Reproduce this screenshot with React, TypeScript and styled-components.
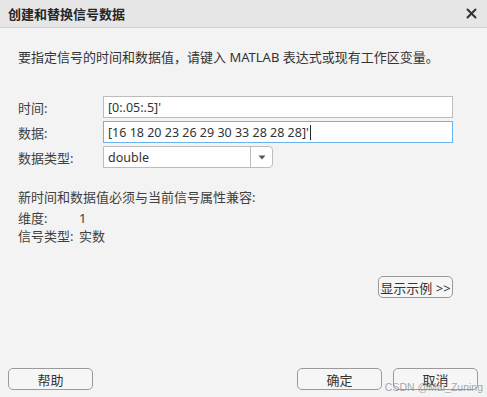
import styled, { createGlobalStyle } from 'styled-components';

const GlobalStyle = createGlobalStyle`
  html, body {
    margin: 0;
    padding: 0;
    background: #f3f3f3;
  }
  body {
    font-family: "Noto Sans", "Noto Sans CJK SC", sans-serif;
    color: #333;
  }
`;

const FONT = `"Noto Sans", "Noto Sans CJK SC", sans-serif`;

function App() {
  return (
    <Window>
      <GlobalStyle />
      <TitleBar>
        <Title>创建和替换信号数据</Title>
        <CloseButton aria-label="关闭">
          <svg width="11" height="11" viewBox="0 0 11 11">
            <path d="M1.5 1.5 L9.5 9.5 M9.5 1.5 L1.5 9.5" stroke="#333" strokeWidth="2" strokeLinecap="round" />
          </svg>
        </CloseButton>
      </TitleBar>

      <Body>
        <Intro>要指定信号的时间和数据值，请键入 MATLAB 表达式或现有工作区变量。</Intro>

        <Form>
          <Label>时间:</Label>
          <Field>[0:.05:.5]'</Field>

          <Label>数据:</Label>
          <Field focused>
            [16 18 20 23 26 29 30 33 28 28 28]'
            <Caret />
          </Field>

          <Label>数据类型:</Label>
          <Select>
            <SelectValue>double</SelectValue>
            <SelectArrow>
              <svg width="8" height="5" viewBox="0 0 8 5">
                <path d="M0.5 0.5 L7.5 0.5 L4 4.5 Z" fill="#555" />
              </svg>
            </SelectArrow>
          </Select>
        </Form>

        <Info>
          <InfoHead>新时间和数据值必须与当前信号属性兼容:</InfoHead>
          <InfoRow>
            <InfoKey>维度:</InfoKey>
            <span>1</span>
          </InfoRow>
          <InfoRow>
            <InfoKey>信号类型:</InfoKey>
            <span>实数</span>
          </InfoRow>
        </Info>

        <ExampleRow>
          <Button width={75}>显示示例 &gt;&gt;</Button>
        </ExampleRow>
      </Body>

      <Footer>
        <Button width={85}>帮助</Button>
        <FooterRight>
          <Button width={85}>确定</Button>
          <Button width={85}>取消</Button>
        </FooterRight>
      </Footer>

      <Watermark>CSDN @Mai_Zuning</Watermark>
    </Window>
  );
}

export default App;

const Window = styled.div`
  position: relative;
  display: flex;
  flex-direction: column;
  width: 487px;
  height: 397px;
  background: #f3f3f3;
  overflow: hidden;
`;

const TitleBar = styled.div`
  display: flex;
  align-items: center;
  justify-content: space-between;
  height: 27px;
  padding: 0 10px 0 8px;
  background: #e6e6e6;
  border-bottom: 1px solid #d2d2d2;
`;

const Title = styled.div`
  font-family: ${FONT};
  font-size: 13px;
  font-weight: bold;
  color: #262626;
`;

const CloseButton = styled.div`
  display: flex;
  align-items: center;
  width: 11px;
  height: 11px;
`;

const Body = styled.div`
  flex: 1;
  display: flex;
  flex-direction: column;
  padding: 20px 34px 0 18px;
`;

const Intro = styled.div`
  font-size: 13px;
  line-height: 18px;
  color: #333;
`;

const Form = styled.div`
  display: grid;
  grid-template-columns: 85px 350px;
  grid-auto-rows: 22px;
  row-gap: 3px;
  align-items: center;
  margin-top: 30px;
`;

const Label = styled.div`
  font-size: 13px;
  color: #404040;
`;

interface PField {
  focused?: boolean;
}

const Field = styled.div<PField>`
  box-sizing: border-box;
  display: flex;
  align-items: center;
  height: 22px;
  padding: 0 4px;
  background: #fff;
  border: 1px solid ${(props) => (props.focused ? '#6cb2ee' : '#bcbcbc')};
  font-size: 12.5px;
  color: #333;
  white-space: pre;
`;

const Caret = styled.span`
  display: inline-block;
  width: 1px;
  height: 15px;
  margin-left: 1px;
  background: #222;
`;

const Select = styled.div`
  box-sizing: border-box;
  display: flex;
  width: 170px;
  height: 22px;
  background: #fff;
  border: 1px solid #bcbcbc;
  border-radius: 0 4px 4px 0;
`;

const SelectValue = styled.div`
  flex: 1;
  display: flex;
  align-items: center;
  padding: 0 4px;
  font-size: 12.5px;
  color: #333;
`;

const SelectArrow = styled.div`
  display: flex;
  align-items: center;
  justify-content: center;
  width: 21px;
  border-left: 1px solid #bcbcbc;
`;

const Info = styled.div`
  display: flex;
  flex-direction: column;
  margin-top: 20px;
  font-size: 13px;
  color: #404040;
`;

const InfoHead = styled.div`
  line-height: 18px;
  margin-bottom: 3px;
`;

const InfoRow = styled.div`
  display: flex;
  line-height: 18px;
`;

const InfoKey = styled.span`
  width: 61px;
`;

const ExampleRow = styled.div`
  display: flex;
  justify-content: flex-end;
  margin-top: 31px;
`;

interface PButton {
  width: number;
}

const Button = styled.div<PButton>`
  box-sizing: border-box;
  display: flex;
  align-items: center;
  justify-content: center;
  width: ${(props) => props.width}px;
  height: 22px;
  border: 1px solid #9a9a9a;
  border-radius: 5px;
  background: #f6f6f6;
  font-size: 13px;
  color: #333;
`;

const Footer = styled.div`
  display: flex;
  justify-content: space-between;
  align-items: center;
  padding: 0 9px 7px 8px;
`;

const FooterRight = styled.div`
  display: flex;
  gap: 11px;
`;

const Watermark = styled.div`
  position: absolute;
  right: 4px;
  bottom: 4px;
  font-family: "Liberation Sans", sans-serif;
  font-size: 10.5px;
  color: rgba(140, 140, 140, 0.75);
`;
